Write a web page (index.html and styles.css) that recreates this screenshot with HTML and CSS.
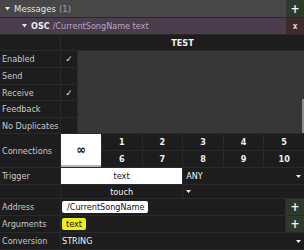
FILE: index.html
```html
<!DOCTYPE html>
<html lang="en">
<head>
    <meta charset="UTF-8">
    <title>OSC Message</title>
    <link rel="stylesheet" href="styles.css">
</head>
<body>
    <div class="bar bar-messages">
        <div class="bar-title">
            <svg class="caret" width="5" height="4" viewBox="0 0 5 4"><polygon points="0,0 5,0 2.5,3.5" fill="#e8e8e8"/></svg>
            <span>Messages</span> <span class="dim">(1)</span>
        </div>
        <div class="bar-btn btn-add">+</div>
    </div>

    <div class="bar bar-osc">
        <div class="bar-title">
            <svg class="caret" width="5" height="4" viewBox="0 0 5 4"><polygon points="0,0 5,0 2.5,3.5" fill="#e8e8e8"/></svg>
            <b>OSC</b> <span class="osc-path">/CurrentSongName text</span>
        </div>
        <div class="bar-btn btn-remove">x</div>
    </div>

    <div class="row row-head">
        <div class="label"></div>
        <div class="cell cell-title">TEST</div>
    </div>

    <div class="flags">
        <div class="label">Enabled</div><div class="check">&#10003;</div>
        <div class="area"><div class="thumb"></div></div>
        <div class="label">Send</div><div class="check"></div>
        <div class="label">Receive</div><div class="check">&#10003;</div>
        <div class="label">Feedback</div><div class="check"></div>
        <div class="label">No Duplicates</div><div class="check"></div>
    </div>

    <div class="conn">
        <div class="label conn-label">Connections</div>
        <div class="cell inf">&infin;</div>
        <div class="cell num">1</div>
        <div class="cell num">2</div>
        <div class="cell num">3</div>
        <div class="cell num">4</div>
        <div class="cell num">5</div>
        <div class="cell num">6</div>
        <div class="cell num">7</div>
        <div class="cell num">8</div>
        <div class="cell num">9</div>
        <div class="cell num">10</div>

        <div class="label">Trigger</div>
        <div class="cell half light">text</div>
        <div class="cell half select">ANY <svg class="arrow" width="5" height="3" viewBox="0 0 5 3"><polygon points="0,0 5,0 2.5,3" fill="#f0f0f0"/></svg></div>

        <div class="label"></div>
        <div class="cell half center">touch</div>
        <div class="cell half select"><svg class="arrow" width="5" height="3" viewBox="0 0 5 3"><polygon points="0,0 5,0 2.5,3" fill="#f0f0f0"/></svg></div>
    </div>

    <div class="row">
        <div class="label">Address</div>
        <div class="cell grow"><span class="chip chip-white">/CurrentSongName</span></div>
        <div class="bar-btn btn-add">+</div>
    </div>
    <div class="row">
        <div class="label">Arguments</div>
        <div class="cell grow"><span class="chip chip-yellow">text</span></div>
        <div class="bar-btn btn-add">+</div>
    </div>
    <div class="row">
        <div class="label">Conversion</div>
        <div class="cell grow select">STRING <svg class="arrow" width="5" height="3" viewBox="0 0 5 3"><polygon points="0,0 5,0 2.5,3" fill="#f0f0f0"/></svg></div>
    </div>
</body>
</html>
```
FILE: styles.css
```css
body {
    margin: 0;
    background: #2a2a2a;
    font-family: "DejaVu Sans Condensed", "Liberation Sans", Arial, sans-serif;
    font-size: 9px;
    color: #cfcfcf;
    display: flex;
    flex-direction: column;
    gap: 1px;
    width: 304px;
}
.bar {
    display: flex;
    height: 16px;
}
.bar-messages { height: 17px; }
.bar-title {
    flex: 1;
    display: flex;
    align-items: center;
    gap: 3px;
    white-space: pre;
}
.bar-messages .bar-title {
    background: #474747;
    color: #e2e2e2;
    padding-left: 5px;
    font-size: 9.5px;
}
.bar-osc .bar-title {
    background: #4b3d4e;
    color: #ececec;
    padding-left: 22px;
}
.dim { color: #a2a2a2; }
.osc-path { color: #b7a7ba; }
.caret { margin-right: 1px; }
.bar-btn {
    width: 18px;
    display: flex;
    align-items: center;
    justify-content: center;
    color: #f4f4f4;
    font-weight: bold;
}
.btn-add { background: #2c392b; font-size: 12px; }
.btn-remove { background: #3f292b; font-size: 8px; color: #d8d8d8; }

.row {
    display: flex;
    gap: 1px;
    height: 16px;
}
.row-head { height: 15px; }
.label {
    width: 60px;
    background: #1d1d1d;
    display: flex;
    align-items: center;
    padding-left: 2px;
    box-sizing: border-box;
    color: #c8c8c8;
    white-space: nowrap;
}
.cell {
    background: #1d1d1d;
    display: flex;
    align-items: center;
    color: #f0f0f0;
}
.cell-title {
    flex: 1;
    justify-content: center;
    font-weight: bold;
}

.flags {
    display: grid;
    grid-template-columns: 60px 16px 1fr;
    grid-template-rows: 16px 16px 15px 16px 15px;
    gap: 1px;
}
.check {
    background: #1d1d1d;
    color: #f0f0f0;
    display: flex;
    align-items: center;
    justify-content: center;
    font-size: 9px;
}
.area {
    grid-column: 3;
    grid-row: 1 / span 5;
    background: #373737;
    display: flex;
    justify-content: flex-end;
    align-items: flex-end;
}
.thumb {
    width: 2px;
    height: 34px;
    background: #8c8c8c;
}

.conn {
    display: grid;
    grid-template-columns: 60px 40px repeat(5, 1fr);
    grid-template-rows: 16px 16px 16px 13px;
    gap: 1px;
}
.conn-label { grid-row: span 2; }
.inf {
    grid-row: span 2;
    background: #ffffff;
    color: #111;
    justify-content: center;
    border-bottom: 2px solid #b4b4b4;
    font-size: 13px;
    font-weight: bold;
}
.num {
    justify-content: center;
    font-weight: bold;
}
.half { grid-column: span 3; }
.light {
    background: #ffffff;
    color: #111;
    justify-content: center;
}
.center { justify-content: center; }
.select {
    justify-content: space-between;
    padding: 0 3px 0 3px;
}
.arrow { flex: none; }
.grow {
    flex: 1;
    padding-left: 1px;
}
.chip {
    height: 12px;
    line-height: 12px;
    border-radius: 2px;
    color: #111;
    padding: 0 4px 0 5px;
}
.chip-white { background: #ffffff; }
.chip-yellow { background: #eded1f; padding: 0 4px; }
```
